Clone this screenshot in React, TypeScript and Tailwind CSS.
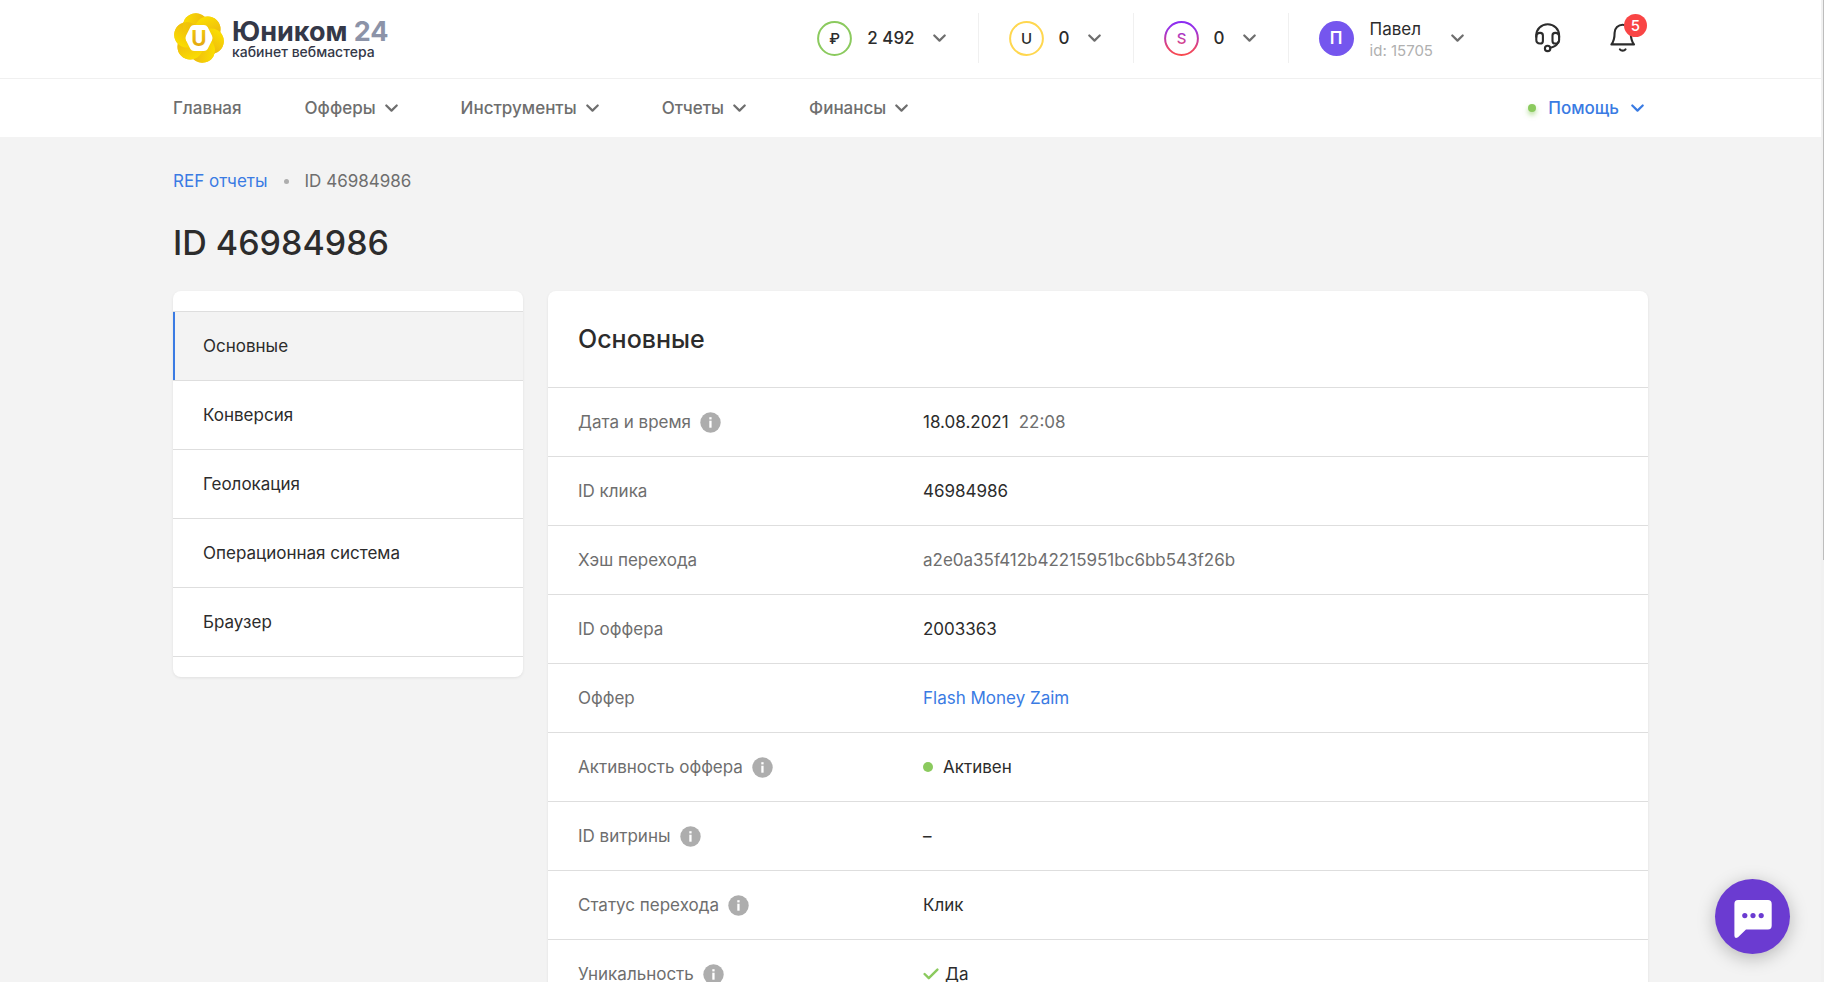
import type { ReactNode } from "react";

function Chevron({ className = "text-[#6e6e6e]" }: { className?: string }) {
  return (
    <svg width="13" height="9" viewBox="0 0 13 9" fill="none" className={`shrink-0 ${className}`} aria-hidden="true">
      <path d="M1.3 1.5 6.5 6.6 11.7 1.5" stroke="currentColor" strokeWidth="2.2" strokeLinecap="round" strokeLinejoin="round" />
    </svg>
  );
}

const petals = [-105, -45, 15, 75, 135, 195];

function LogoMark() {
  return (
    <svg width="52" height="52" viewBox="-26 -26 52 52" className="shrink-0" aria-hidden="true">
      <defs>
        <linearGradient id="petal" x1="0" y1="0.3" x2="1" y2="0.7">
          <stop offset="0" stopColor="#fbe000" />
          <stop offset="0.5" stopColor="#f3c80a" stopOpacity="0.9" />
          <stop offset="1" stopColor="#e5a812" stopOpacity="0.35" />
        </linearGradient>
        <linearGradient id="mark" x1="0" y1="0" x2="0" y2="1">
          <stop offset="0" stopColor="#f3cd0c" />
          <stop offset="1" stopColor="#e0a010" />
        </linearGradient>
      </defs>
      {petals.map((angle) => (
        <circle key={angle} transform={`rotate(${angle + 90})`} cy="-12.4" r="12.8" fill="#f2c80c" />
      ))}
      {petals.map((angle) => (
        <circle key={angle} transform={`rotate(${angle + 90})`} cy="-12.4" r="12.8" fill="url(#petal)" />
      ))}
      <path
        d="M-13 -2.2 -8.6 -11Q-7.4 -13 -5 -13H5Q7.4 -13 8.6 -11L13 -2.2Q14 0 13 2.2L8.6 11Q7.4 13 5 13H-5Q-7.4 13 -8.6 11L-13 2.2Q-14 0 -13 -2.2Z"
        fill="#fff"
      />
      <text y="7.5" textAnchor="middle" fontSize="21" fontWeight="700" fill="url(#mark)">
        U
      </text>
    </svg>
  );
}

function Coin({ sign, ring, ink }: { sign: string; ring: string; ink: string }) {
  return (
    <svg width="35" height="35" viewBox="0 0 35 35" fill="none" className="shrink-0" aria-hidden="true">
      <circle cx="17.5" cy="17.5" r="16.4" stroke={ring} strokeWidth="2" />
      <text x="17.5" y="23" textAnchor="middle" fontSize="15" fontWeight="500" fill={ink}>
        {sign}
      </text>
    </svg>
  );
}

function Balance({ amount, ...coin }: { amount: string; sign: string; ring: string; ink: string }) {
  return (
    <button type="button" className="mr-[30px] flex h-[50px] items-center border-r border-[#f0f0f0] pr-8">
      <Coin {...coin} />
      <span className="mr-[18px] ml-[15px] font-medium">{amount}</span>
      <Chevron />
    </button>
  );
}

function Headset() {
  return (
    <svg width="26" height="30" viewBox="0 0 26 30" fill="none" stroke="#2c2c2c" strokeWidth="2.1" aria-hidden="true">
      <path d="M1.3 14.5V12.4C1.3 6 6.2 1.2 12.7 1.2S24.1 6 24.1 12.4v2.1" />
      <path d="M1.3 13.5c0-2.4 1.3-3.6 3.6-3.6h.4c1.6 0 2.6 1 2.6 2.6v5.4c0 1.6-1 2.6-2.6 2.6h-.4c-2.3 0-3.6-1.3-3.6-3.6zM24.1 13.5c0-2.4-1.3-3.6-3.6-3.6h-.4c-1.6 0-2.6 1-2.6 2.6v5.4c0 1.6 1 2.6 2.6 2.6h.4c2.3 0 3.6-1.3 3.6-3.6z" />
      <path d="M23.2 19.2c-1.2 3-4 4.8-7.8 5.5" strokeLinecap="round" />
      <circle cx="12.6" cy="25.4" r="2.7" />
    </svg>
  );
}

function Bell() {
  return (
    <svg width="26" height="30" viewBox="0 0 26 30" fill="none" stroke="#2c2c2c" strokeWidth="2.1" strokeLinejoin="round" aria-hidden="true">
      <path d="M1.4 21.4C4 18.3 4.6 15.6 4.6 9.8a8.1 8.1 0 0 1 16.2 0c0 5.8.6 8.5 3.2 11.6z" />
      <path d="M9.9 26.3c1.4 1.8 4.2 1.8 5.6 0" strokeLinecap="round" />
    </svg>
  );
}

function Info() {
  return (
    <svg width="21" height="21" viewBox="0 0 21 21" className="shrink-0" role="img" aria-label="Подсказка">
      <circle cx="10.5" cy="10.5" r="10.2" fill="#adadad" />
      <rect x="9.3" y="8.7" width="2.3" height="7" fill="#fff" />
      <rect x="9.3" y="5.2" width="2.3" height="2.2" fill="#fff" />
    </svg>
  );
}

const navigation = [
  { label: "Главная", menu: false },
  { label: "Офферы", menu: true },
  { label: "Инструменты", menu: true },
  { label: "Отчеты", menu: true },
  { label: "Финансы", menu: true },
];

const sections = ["Основные", "Конверсия", "Геолокация", "Операционная система", "Браузер"];

const rows: { label: string; info?: boolean; value: ReactNode }[] = [
  {
    label: "Дата и время",
    info: true,
    value: (
      <span className="flex gap-2.5">
        18.08.2021 <span className="text-[#6e6e6e]">22:08</span>
      </span>
    ),
  },
  { label: "ID клика", value: "46984986" },
  { label: "Хэш перехода", value: <span className="text-[#6e6e6e]">a2e0a35f412b42215951bc6bb543f26b</span> },
  { label: "ID оффера", value: "2003363" },
  {
    label: "Оффер",
    value: (
      <a href="#offer" className="text-[#3a7be3]">
        Flash Money Zaim
      </a>
    ),
  },
  {
    label: "Активность оффера",
    info: true,
    value: (
      <span className="flex items-center gap-2.5">
        <span className="size-2.5 rounded-full bg-[#8bca5e]" />
        Активен
      </span>
    ),
  },
  { label: "ID витрины", info: true, value: "–" },
  { label: "Статус перехода", info: true, value: "Клик" },
  {
    label: "Уникальность",
    info: true,
    value: (
      <span className="flex items-center gap-1.5">
        <svg width="16" height="12" viewBox="0 0 16 12" fill="none" aria-hidden="true">
          <path d="M1.6 6 5.8 10.2 14.4 1.6" stroke="#8bca5e" strokeWidth="2.4" strokeLinecap="round" strokeLinejoin="round" />
        </svg>
        Да
      </span>
    ),
  },
];

export default function App() {
  return (
    <div className="h-screen overflow-y-auto bg-[#f3f3f3] pr-[3px] font-['Inter','Liberation_Sans',sans-serif] text-[17px] leading-6 text-[#2c2c2c] [scrollbar-width:none]">
      <svg width="0" height="0" className="absolute" aria-hidden="true">
        <defs>
          <linearGradient id="score" gradientUnits="userSpaceOnUse" x1="0" y1="0" x2="0" y2="35">
            <stop offset="0" stopColor="#8a2bf5" />
            <stop offset="0.25" stopColor="#9a32e0" />
            <stop offset="0.75" stopColor="#e54472" />
            <stop offset="1" stopColor="#fb4a4a" />
          </linearGradient>
        </defs>
      </svg>

      <header className="bg-white">
        <div className="border-b border-[#f0f0f0]">
          <div className="mx-auto flex h-[78px] max-w-[1475px] items-center justify-between pb-0.5">
            <a href="#home" className="flex items-center gap-[7px] text-[#343848]">
              <LogoMark />
              <span className="flex flex-col pt-1">
                <span className="text-[27px] leading-6 font-bold">
                  Юником <span className="text-[#8c93a8]">24</span>
                </span>
                <span className="text-sm leading-4 font-medium">кабинет вебмастера</span>
              </span>
            </a>
            <div className="flex items-center">
              <Balance sign="₽" ring="#8bca5e" ink="#2c2c2c" amount="2 492" />
              <Balance sign="U" ring="#ffd74f" ink="#2c2c2c" amount="0" />
              <Balance sign="S" ring="url(#score)" ink="url(#score)" amount="0" />
              <button type="button" className="flex items-center text-left">
                <span className="grid size-[35px] place-items-center rounded-full bg-[#7556ee] font-semibold text-white">П</span>
                <span className="mr-[18px] ml-4 flex flex-col pt-1">
                  <span className="leading-[22px]">Павел</span>
                  <span className="text-[15px] leading-[22px] text-[#b0b0b0]">id: 15705</span>
                </span>
                <Chevron />
              </button>
              <button type="button" aria-label="Поддержка" className="ml-[71px]">
                <Headset />
              </button>
              <button type="button" aria-label="Уведомления" className="relative mr-3 ml-[49px]">
                <Bell />
                <span className="absolute -top-[9px] -right-[11px] grid size-[23px] place-items-center rounded-full bg-[#f94545] text-[15px] font-medium text-white">
                  5
                </span>
              </button>
            </div>
          </div>
        </div>
        <nav className="mx-auto flex h-[58px] max-w-[1475px] items-center justify-between pr-1 font-medium text-[#6e6e6e]">
          <div className="flex items-center gap-[63px]">
            {navigation.map((item) =>
              item.menu ? (
                <button key={item.label} type="button" className="flex items-center gap-[9px]">
                  {item.label}
                  <Chevron />
                </button>
              ) : (
                <a key={item.label} href="#home">
                  {item.label}
                </a>
              ),
            )}
          </div>
          <button type="button" className="flex items-center gap-3 text-[#3a7be3]">
            <span className="size-2 rounded-full bg-[#8bca5e] shadow-[0_3px_5px_#8bca5e99]" />
            Помощь
            <Chevron className="text-[#3a7be3]" />
          </button>
        </nav>
      </header>

      <main className="mx-auto max-w-[1475px] pt-8 pb-12">
        <nav className="flex items-center gap-4" aria-label="Навигация">
          <a href="#reports" className="text-[#3a7be3]">
            REF отчеты
          </a>
          <span className="size-[5px] rounded-full bg-[#adadad]" />
          <span className="text-[#6e6e6e]">ID 46984986</span>
        </nav>
        <h1 className="mt-[30px] text-[34px] leading-10 font-medium">ID 46984986</h1>

        <div className="mt-7 flex items-start gap-[25px]">
          <aside className="w-[350px] shrink-0 rounded-lg bg-white py-5 shadow-[0_1px_3px_rgba(0,0,0,0.08)]">
            <ul className="border-t border-[#dedede]">
              {sections.map((section, index) => (
                <li key={section} className="border-b border-[#dedede]">
                  <a
                    href="#section"
                    className={
                      index === 0
                        ? "flex h-[68px] items-center border-l-2 border-[#3a7be3] bg-[#f3f3f3] px-7"
                        : "flex h-[68px] items-center px-[30px]"
                    }
                  >
                    {section}
                  </a>
                </li>
              ))}
            </ul>
          </aside>

          <section className="min-w-0 flex-1 rounded-lg bg-white shadow-[0_1px_3px_rgba(0,0,0,0.08)]">
            <h2 className="flex h-24 items-center px-[30px] text-[25px] leading-8 font-medium">Основные</h2>
            <table className="w-full border-collapse text-left">
              <tbody>
                {rows.map((row) => (
                  <tr key={row.label} className="h-[69px] border-t border-[#dedede]">
                    <th scope="row" className="w-[375px] pl-[30px] font-normal text-[#6e6e6e]">
                      <span className="flex items-center gap-[9px]">
                        {row.label}
                        {row.info && <Info />}
                      </span>
                    </th>
                    <td className="pr-[30px]">{row.value}</td>
                  </tr>
                ))}
              </tbody>
            </table>
          </section>
        </div>
      </main>

      <button
        type="button"
        aria-label="Открыть чат"
        className="fixed right-[34px] bottom-7 grid size-[75px] place-items-center rounded-full bg-[#6b3bd1] shadow-[0_4px_18px_rgba(0,0,0,0.25)]"
      >
        <svg width="38" height="38" viewBox="0 0 38 38" className="mt-1" aria-hidden="true">
          <path d="M4 0H34Q37.7 0 37.7 4V25.5Q37.7 29.5 34 29.5H12L4 37.2Q.4 39.2 .4 35.5V4Q.4 0 4 0Z" fill="#fff" />
          <g fill="#6b3bd1">
            <circle cx="10.8" cy="15.6" r="2.6" />
            <circle cx="19" cy="15.6" r="2.6" />
            <circle cx="27.2" cy="15.6" r="2.6" />
          </g>
        </svg>
      </button>

      <div className="fixed inset-y-0 right-0 flex w-[3px] justify-end bg-[#f1f1f1]" aria-hidden="true">
        <div className="h-[57%] w-px bg-[#bdbdbd]" />
      </div>
    </div>
  );
}
